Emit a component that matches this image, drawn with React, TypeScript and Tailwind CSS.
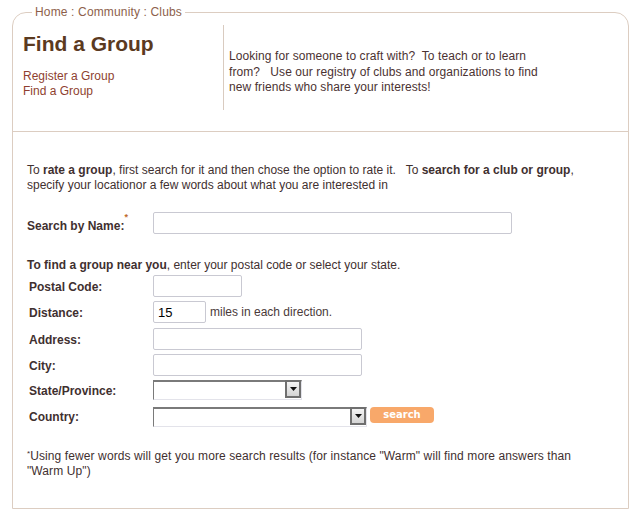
import React from "react";

const font = { fontFamily: '"Liberation Sans", Arial, sans-serif' };

function TextBox({ w, value }: { w: string; value?: string }) {
  return (
    <div className={`${w} h-[22px] border border-[#c9c9d2] rounded-[2px] bg-white flex items-center px-[4px] text-[13px] font-normal text-black`}>
      {value}
    </div>
  );
}

function Select({ w }: { w: string }) {
  return (
    <div className={`${w} h-[20px] flex bg-white border-t-2 border-l border-[#7a7a7a] border-b border-r border-b-[#e3e3ea] border-r-[#e3e3ea]`}>
      <div className="flex-1" />
      <div className="w-[16px] h-[18px] -mt-[2px] border-2 border-[#6f6f6f] bg-gradient-to-b from-[#f4f4f4] to-[#d4d4d4] flex items-center justify-center">
        <svg width="7" height="4" viewBox="0 0 7 4">
          <path d="M0 0h7L3.5 4z" fill="#111" />
        </svg>
      </div>
    </div>
  );
}

const rows: { label: string; field: React.ReactNode; gap: string }[] = [
  { label: "Postal Code:", field: <TextBox w="w-[89px]" />, gap: "mt-0" },
  {
    label: "Distance:",
    gap: "mt-[4px]",
    field: (
      <div className="flex items-center gap-[4px]">
        <TextBox w="w-[53px]" value="15" />
        <span className="text-[12px] text-[#4a3a3a] font-normal">miles in each direction.</span>
      </div>
    ),
  },
  { label: "Address:", field: <TextBox w="w-[209px]" />, gap: "mt-[5px]" },
  { label: "City:", field: <TextBox w="w-[209px]" />, gap: "mt-[4px]" },
];

export default function App() {
  return (
    <div className="bg-white w-[641px] h-[520px] pt-[5px] px-[12px]" style={font}>
      <fieldset className="border border-[#dccdc1] rounded-t-[14px] h-[504px] min-w-0">
        <legend className="ml-[19px] px-[3px] text-[12px] leading-[14px] tracking-[0.15px] text-[#8d5f4b]">
          Home : Community : Clubs
        </legend>

        {/* header */}
        <div className="flex h-[113px] border-b border-[#dccdc1]">
          <div className="w-[210px] pl-[10px] pt-[12px]">
            <h1 className="text-[21px] leading-[26px] font-bold text-[#5b3a1f]">Find a Group</h1>
            <div className="mt-[12px] text-[12px] leading-[15px] text-[#8e3f30]">
              <div>Register a Group</div>
              <div>Find a Group</div>
            </div>
          </div>
          <div className="mt-[6px] h-[85px] border-l border-[#d9cbc0] pl-[5px] pt-[24px] text-[12px] leading-[15.5px] tracking-[0.08px] text-[#4b3232]">
            Looking for someone to craft with?&nbsp; To teach or to learn
            <br />
            from?&nbsp;&nbsp; Use our registry of clubs and organizations to find
            <br />
            new friends who share your interests!
          </div>
        </div>

        {/* body */}
        <div className="pl-[14px] pt-[31px] text-[12px] leading-[15px] text-[#3f3030]">
          <p>
            To <b>rate a group</b>, first search for it and then chose the option to rate it.&nbsp;&nbsp; To{" "}
            <b>search for a club or group</b>,
            <br />
            specify your locationor a few words about what you are interested in
          </p>

          <div className="mt-[19px] flex items-center">
            <div className="w-[126px] font-bold pt-[6px]">
              Search by Name:<sup className="text-[9px] text-[#c06a2a] align-super">*</sup>
            </div>
            <TextBox w="w-[359px]" />
          </div>

          <p className="mt-[24px]">
            <b>To find a group near you</b>, enter your postal code or select your state.
          </p>

          <div className="mt-[2px] pl-[2px] flex flex-col font-bold">
            {rows.map((r) => (
              <div key={r.label} className={`flex items-center ${r.gap}`}>
                <div className="w-[124px] pt-[2px]">{r.label}</div>
                {r.field}
              </div>
            ))}
            <div className="flex items-center mt-[4px]">
              <div className="w-[124px] pt-[2px]">State/Province:</div>
              <Select w="w-[149px]" />
            </div>
            <div className="flex items-center mt-[7px]">
              <div className="w-[124px]">Country:</div>
              <Select w="w-[214px]" />
              <button
                className="ml-[3px] -mt-[5px] w-[64px] h-[16px] rounded-[4px] bg-[#f8a86a] text-white text-[10px] leading-[16px] font-bold"
                style={{ fontFamily: '"DejaVu Sans", Verdana, sans-serif' }}
              >
                search
              </button>
            </div>
          </div>

          <p className="mt-[22px] tracking-[0.1px]">
            <sup className="text-[8px]">*</sup>Using fewer words will get you more search results (for instance "Warm" will find more answers than
            <br />
            "Warm Up")
          </p>
        </div>
      </fieldset>
    </div>
  );
}
